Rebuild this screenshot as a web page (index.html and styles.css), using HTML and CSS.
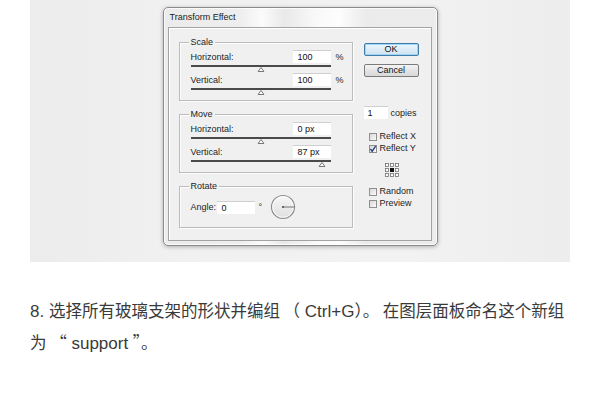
FILE: index.html
```html
<!DOCTYPE html>
<html lang="zh-CN">
<head>
<meta charset="utf-8">
<title>Transform Effect</title>
<link rel="stylesheet" href="styles.css">
</head>
<body>
<div class="panel">
  <div class="dialog">
    <div class="titlebar">Transform Effect</div>
    <div class="frame">
      <div class="left">
        <div class="group">
          <span class="legend">Scale</span>
          <div class="row"><span class="lbl">Horizontal:</span><span class="field">100</span><span class="unit">%</span></div>
          <div class="slider"><span class="thumb" style="left:50%"><svg width="7" height="5" viewBox="0 0 7 5"><polygon points="3.5,0.5 6.5,4.5 0.5,4.5" fill="#fff" stroke="#777" stroke-width="1"/></svg></span></div>
          <div class="row"><span class="lbl">Vertical:</span><span class="field">100</span><span class="unit">%</span></div>
          <div class="slider"><span class="thumb" style="left:50%"><svg width="7" height="5" viewBox="0 0 7 5"><polygon points="3.5,0.5 6.5,4.5 0.5,4.5" fill="#fff" stroke="#777" stroke-width="1"/></svg></span></div>
        </div>
        <div class="group">
          <span class="legend">Move</span>
          <div class="row"><span class="lbl">Horizontal:</span><span class="field">0 px</span><span class="unit"></span></div>
          <div class="slider"><span class="thumb" style="left:50%"><svg width="7" height="5" viewBox="0 0 7 5"><polygon points="3.5,0.5 6.5,4.5 0.5,4.5" fill="#fff" stroke="#777" stroke-width="1"/></svg></span></div>
          <div class="row"><span class="lbl">Vertical:</span><span class="field">87 px</span><span class="unit"></span></div>
          <div class="slider"><span class="thumb" style="left:94%"><svg width="7" height="5" viewBox="0 0 7 5"><polygon points="3.5,0.5 6.5,4.5 0.5,4.5" fill="#fff" stroke="#777" stroke-width="1"/></svg></span></div>
        </div>
        <div class="group rotate">
          <span class="legend">Rotate</span>
          <div class="angle-row">
            <span class="lbl angle-lbl">Angle:</span><span class="field">0</span><span class="deg">°</span>
            <svg class="dial" width="26" height="26" viewBox="0 0 26 26">
              <defs>
                <linearGradient id="dg" x1="0" y1="0" x2="0" y2="1">
                  <stop offset="0" stop-color="#f7f7f7"/>
                  <stop offset="1" stop-color="#dedede"/>
                </linearGradient>
              </defs>
              <circle cx="13" cy="13" r="11.5" fill="url(#dg)" stroke="#8d8d8d" stroke-width="1.2"/>
              <circle cx="13" cy="13" r="10.3" fill="none" stroke="#fff" stroke-width="0.8"/>
              <line x1="13" y1="13" x2="24.5" y2="13" stroke="#666" stroke-width="0.9"/>
              <circle cx="13" cy="13" r="1" fill="#444"/>
            </svg>
          </div>
        </div>
      </div>
      <div class="right">
        <div class="btn ok">OK</div>
        <div class="btn cancel">Cancel</div>
        <div class="copies"><span class="field small">1</span><span class="copies-lbl">copies</span></div>
        <div class="check first"><span class="box"></span><span>Reflect X</span></div>
        <div class="check"><span class="box"><svg width="8" height="8" viewBox="0 0 8 8"><polyline points="1.5,4 3.2,6.3 6.6,1.2" fill="none" stroke="#1d3a7a" stroke-width="1.3"/></svg></span><span>Reflect Y</span></div>
        <svg class="refpoint" width="14" height="14" viewBox="0 0 14 14">
          <g fill="#fff" stroke="#6f6f6f" stroke-width="0.8">
            <rect x="0.5" y="0.5" width="3" height="3"/>
            <rect x="5.5" y="0.5" width="3" height="3"/>
            <rect x="10.5" y="0.5" width="3" height="3"/>
            <rect x="0.5" y="5.5" width="3" height="3"/>
            <rect x="10.5" y="5.5" width="3" height="3"/>
            <rect x="0.5" y="10.5" width="3" height="3"/>
            <rect x="5.5" y="10.5" width="3" height="3"/>
            <rect x="10.5" y="10.5" width="3" height="3"/>
          </g>
          <rect x="5" y="5" width="4" height="4" fill="#111"/>
        </svg>
        <div class="check first2"><span class="box"></span><span>Random</span></div>
        <div class="check"><span class="box"></span><span>Preview</span></div>
      </div>
    </div>
  </div>
</div>
<p class="text"><span class="en">8. </span>选择所有玻璃支架的形状并编组 （<span class="en"> Ctrl+G</span>）。 在图层面板命名这个新组<br>为 “<span class="en"> support </span>”。</p>
</body>
</html>
```

FILE: styles.css
```css
html, body {
  margin: 0;
  padding: 0;
  background: #ffffff;
}

body {
  font-family: "Liberation Sans", Arial, sans-serif;
}

.panel {
  margin: 0 30px;
  height: 262px;
  box-sizing: border-box;
  padding-top: 7px;
  background: linear-gradient(90deg, #ececec 0%, #f1f1f1 30%, #f2f2f2 70%, #ededed 100%);
  display: flex;
  justify-content: center;
  align-items: flex-start;
}

.dialog {
  width: 275px;
  height: 239px;
  box-sizing: border-box;
  border: 1px solid #8a8a8a;
  border-radius: 5px;
  padding: 0 5px 4px 4px;
  display: flex;
  flex-direction: column;
  background: linear-gradient(90deg, #ebebeb 0%, #eeeeee 28%, #fbfbfb 36%, #e9e9e9 44%, #f9f9f9 56%, #fdfdfd 64%, #ebebeb 74%, #ececec 100%);
  box-shadow: 0 1px 4px rgba(0, 0, 0, 0.28), inset 0 0 0 1px rgba(255, 255, 255, 0.8);
}

.titlebar {
  height: 19px;
  line-height: 19px;
  padding-left: 2px;
  font-size: 9px;
  color: #1a1a1a;
}

.frame {
  flex: 1;
  display: flex;
  border: 1px solid #a3a3a3;
  background: #f0f0f0;
  box-shadow: inset 1px 1px 0 #ffffff;
  padding: 14px 0 0 10px;
  font-size: 9px;
  color: #1e1e1e;
}

.left {
  width: 174px;
  display: flex;
  flex-direction: column;
  gap: 13px;
}

.group {
  border: 1px solid #bcbcbc;
  box-shadow: inset 1px 1px 0 #fdfdfd, 1px 1px 0 #fdfdfd;
  padding: 0 0 4px 11px;
}

.legend {
  display: block;
  width: fit-content;
  margin: -6px 0 0 -2px;
  padding: 0 2px;
  background: #f0f0f0;
  line-height: 11px;
  height: 11px;
}

.row {
  display: flex;
  align-items: center;
  height: 13px;
  margin-top: 2px;
}

.slider + .row {
  margin-top: 0;
}

.lbl {
  flex: 1;
}

.field {
  width: 38px;
  height: 13px;
  line-height: 13px;
  box-sizing: border-box;
  padding-left: 5px;
  background: #ffffff;
  border-top: 1px solid #cfcfcf;
  color: #111;
}

.unit {
  width: 21px;
  padding-left: 5px;
  box-sizing: border-box;
}

.slider {
  position: relative;
  width: 140px;
  height: 2px;
  margin-top: 2px;
  margin-bottom: 6px;
  background: #4a4a4a;
}

.thumb {
  position: absolute;
  top: 2px;
  transform: translateX(-50%);
  display: block;
  width: 7px;
  height: 5px;
}

.thumb svg {
  display: block;
}

.rotate {
  padding-bottom: 7px;
}

.angle-row {
  display: flex;
  align-items: center;
  height: 26px;
  margin-top: 2px;
}

.angle-lbl {
  flex: none;
  width: 26px;
}

.deg {
  margin-left: 4px;
  width: 11px;
}

.dial {
  display: block;
}

.right {
  width: 64px;
  margin-left: 11px;
  display: flex;
  flex-direction: column;
  align-items: flex-start;
}

.btn {
  width: 55px;
  height: 13px;
  box-sizing: border-box;
  line-height: 11px;
  text-align: center;
  border-radius: 2px;
  background: linear-gradient(#f4f4f4, #e4e4e4 50%, #d9d9d9);
  border: 1px solid #7b7b7b;
  color: #111;
}

.ok {
  margin-top: 1px;
  border-color: #3d7cab;
  box-shadow: inset 0 0 0 1px #9fd6f3;
  background: linear-gradient(#eef7fc, #dcecf6 50%, #cfe3f0);
}

.cancel {
  margin-top: 8px;
}

.copies {
  margin-top: 29px;
  display: flex;
  align-items: center;
}

.field.small {
  width: 24px;
  padding-left: 4px;
}

.copies-lbl {
  margin-left: 3px;
}

.check {
  display: flex;
  align-items: center;
  height: 9px;
  margin-top: 3px;
  margin-left: 5px;
  line-height: 9px;
}

.check.first {
  margin-top: 13px;
}

.check.first2 {
  margin-top: 10px;
}

.box {
  width: 8px;
  height: 8px;
  box-sizing: border-box;
  border: 1px solid #8f8f8f;
  background: linear-gradient(135deg, #d8d8d8, #fafafa);
  margin-right: 3px;
  display: flex;
  align-items: center;
  justify-content: center;
}

.box svg {
  display: block;
  flex: none;
}

.refpoint {
  display: block;
  margin: 10px 0 0 21px;
}

.text {
  margin: 33px 30px 0;
  font-family: "Noto Sans CJK SC", sans-serif;
  font-size: 16.5px;
  line-height: 30px;
  color: #3a3a3a;
}

.en {
  font-family: "Liberation Sans", Arial, sans-serif;
  font-size: 17px;
}
```
